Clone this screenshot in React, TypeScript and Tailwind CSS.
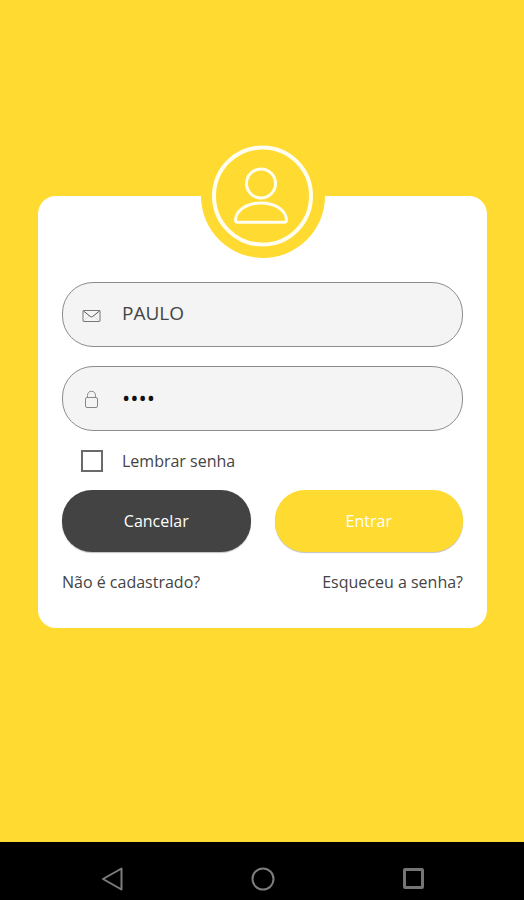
import { useState } from "react";

function UserIcon() {
  return (
    <svg viewBox="0 0 124 124" className="w-full" fill="none" stroke="#fffef0" aria-hidden="true">
      <circle cx="61.5" cy="62" r="48.5" strokeWidth="4" />
      <circle cx="60" cy="49.5" r="14.5" strokeWidth="3" />
      <path
        d="M34.5 86C35 76 46 69 60 69s25 7 25.5 17c0 1.500-.8 2.300-2.300 2.300H36.800c-1.500 0-2.300-.8-2.300-2.300Z"
        strokeWidth="3"
        strokeLinejoin="round"
      />
    </svg>
  );
}

function MailIcon() {
  return (
    <svg viewBox="0 0 20 20" className="size-5" fill="none" stroke="#777777" aria-hidden="true">
      <rect x="1" y="5.5" width="17" height="11" rx="0.5" />
      <path d="m2 16 5.500-5.500M17 16l-5.500-5.500" stroke="#dddddd" />
      <path d="m1.500 6 6.800 5.500q1.200.9 2.400 0L17.500 6" stroke="#555555" />
    </svg>
  );
}

function LockIcon() {
  return (
    <svg viewBox="0 0 20 20" className="size-5" fill="none" stroke="#888888" aria-hidden="true">
      <rect x="3.5" y="8.500" width="12" height="10" rx="1.5" />
      <path d="M5.500 8.500V6.500C5.500 4 7 2.300 9.500 2.300s4 1.700 4 4.200v2" />
    </svg>
  );
}

const fieldClass =
  "flex h-[65px] items-center rounded-[31px] border border-[#8c8c8c] bg-[#f4f4f4] pl-[19px] pr-6";

export default function App() {
  const [user, setUser] = useState("PAULO");
  const [password, setPassword] = useState("1234");
  const [remember, setRemember] = useState(false);

  return (
    <div className="flex min-h-screen flex-col bg-[#ffda30] font-['Open_Sans','Noto_Sans',sans-serif] text-base text-[#444444]">
      <main className="flex-1 pt-[196px] pr-[37px] pb-8 pl-[38px]">
        <form
          className="relative rounded-[18px] bg-white px-6 pt-[86px] pb-4"
          onSubmit={(e) => e.preventDefault()}
        >
          {/* Avatar */}
          <div className="absolute -top-[62px] left-1/2 w-[124px] -translate-x-1/2 rounded-full bg-[#ffda30]">
            <UserIcon />
          </div>

          <div className="flex flex-col gap-[19px]">
            <div className={fieldClass}>
              <MailIcon />
              <input
                type="text"
                aria-label="Usuário"
                value={user}
                onChange={(e) => setUser(e.target.value)}
                className="ml-5 h-9 w-full min-w-0 flex-1 bg-transparent pb-1 text-[19px] outline-none"
              />
            </div>
            <div className={fieldClass}>
              <LockIcon />
              <input
                type="password"
                aria-label="Senha"
                value={password}
                onChange={(e) => setPassword(e.target.value)}
                className="ml-5 h-9 w-full min-w-0 flex-1 bg-transparent pb-1 text-[22px] text-[#111111] outline-none"
              />
            </div>
          </div>

          <label className="flex h-[59px] items-center pl-[19px]">
            <input
              type="checkbox"
              checked={remember}
              onChange={(e) => setRemember(e.target.checked)}
              className="size-[22px] appearance-none border-2 border-[#6a6a6a] bg-white checked:bg-[#444444]"
            />
            <span className="ml-[19px]">Lembrar senha</span>
          </label>

          <div className="grid grid-cols-2 gap-6">
            <button
              type="button"
              className="h-[62px] rounded-[30px] bg-[#434343] text-white shadow-[0_1px_1px_rgba(0,0,0,0.25)]"
            >
              Cancelar
            </button>
            <button
              type="submit"
              className="h-[62px] rounded-[30px] bg-[#ffda30] text-white shadow-[0_1px_1px_rgba(0,0,0,0.25)]"
            >
              Entrar
            </button>
          </div>

          <div className="flex h-[60px] items-center justify-between">
            <a href="#cadastro">Não é cadastrado?</a>
            <a href="#senha">Esqueceu a senha?</a>
          </div>
        </form>
      </main>

      {/* System navigation bar */}
      <nav className="grid h-[58px] grid-cols-3 items-center justify-items-center bg-black pt-4 pr-9 pl-[38px]">
        <button type="button" aria-label="Voltar">
          <svg viewBox="0 0 24 24" className="size-6" fill="none" stroke="#7d7d7d" strokeWidth="2">
            <path d="M20.500 1.500v21L2 12Z" strokeLinejoin="round" />
          </svg>
        </button>
        <button type="button" aria-label="Início">
          <svg viewBox="0 0 24 24" className="size-6" fill="none" stroke="#7d7d7d" strokeWidth="2">
            <circle cx="12" cy="12" r="10.5" />
          </svg>
        </button>
        <button type="button" aria-label="Recentes">
          <svg viewBox="0 0 24 24" className="size-6" fill="none" stroke="#757575" strokeWidth="3">
            <rect x="3.500" y="2.500" width="18" height="18" rx="0.5" />
          </svg>
        </button>
      </nav>
    </div>
  );
}
